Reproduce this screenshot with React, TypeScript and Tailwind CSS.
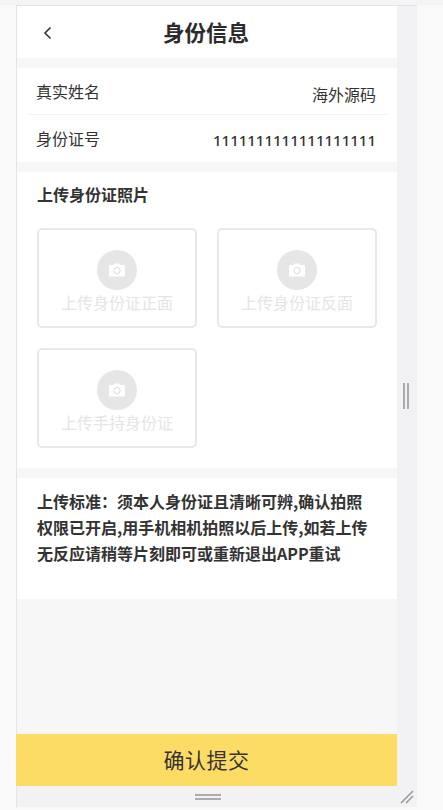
const font = { fontFamily: '"Noto Sans CJK SC", "Liberation Sans", sans-serif' };

function Camera() {
  return (
    <svg width="20" height="20" viewBox="0 0 20 20" aria-hidden="true">
      <path
        d="M3.5 5h3l1-1.6h5l1 1.6h3A1.2 1.2 0 0 1 18 6.2v9.2a1.2 1.2 0 0 1-1.2 1.2H3.2A1.2 1.2 0 0 1 2 15.4V6.2A1.2 1.2 0 0 1 3.5 5z"
        fill="#ffffff"
      />
      <circle cx="10" cy="10.6" r="3.1" fill="none" stroke="#dcdcdc" strokeWidth="1" />
    </svg>
  );
}

function UploadCard({ label }: { label: string }) {
  return (
    <div className="w-[160px] h-[100px] border-2 border-[#e8e8e8] rounded-[5px] flex flex-col items-center pt-[20px]">
      <div className="w-[40px] h-[40px] rounded-full bg-[#e6e6e6] flex items-center justify-center">
        <Camera />
      </div>
      <div className="text-[16px] leading-[24px] text-[#e5e5e5] whitespace-nowrap">{label}</div>
    </div>
  );
}

export default function App() {
  return (
    <div className="h-[810px] w-[443px] overflow-hidden bg-[#f9f9f9] text-[#333333]" style={font}>
      <div className="h-[5px] bg-[#f4f4f4]" />
      <div className="ml-[16px] relative w-[401px] h-[802px] bg-[#f2f2f4] border-l border-t border-[#e4e4e4] flex">
        <div className="w-[380px] h-[780px] bg-[#f7f7f8] flex flex-col">
          <header className="h-[52px] bg-white flex items-center relative shrink-0">
            <svg className="absolute left-[25px] top-[19px]" width="12" height="16" viewBox="0 0 12 16" aria-hidden="true">
              <path d="M8.5 2.5 3 8l5.5 5.5" fill="none" stroke="#333333" strokeWidth="1.6" />
            </svg>
            <h1 className="w-full text-center text-[21.5px] font-bold leading-[52px] text-[#2b2b2b] pr-[2px]">身份信息</h1>
          </header>

          <section className="mt-[10px] h-[94px] bg-white shrink-0 flex flex-col pl-[11px] pr-[9px]">
            <div className="h-[47px] flex justify-between pl-[9px] pr-[12px] border-b border-[#f2f2f2] text-[16px]">
              <span className="leading-[46px] -ml-px">真实姓名</span>
              <span className="leading-[52px]">海外源码</span>
            </div>
            <div className="h-[47px] flex justify-between pl-[9px] pr-[12px] text-[16px]">
              <span className="leading-[46px] -ml-px">身份证号</span>
              <span className="leading-[50px] text-[15px] font-medium" style={{ fontFamily: '"Noto Sans", sans-serif' }}>
                1111111111111111111
              </span>
            </div>
          </section>

          <section className="mt-[10px] h-[296px] bg-white shrink-0 px-[20px]">
            <h2 className="pt-[10px] text-[16px] font-bold leading-[24px]">上传身份证照片</h2>
            <div className="mt-[22px] grid grid-cols-[160px_160px] gap-x-[20px] gap-y-[20px]">
              <UploadCard label="上传身份证正面" />
              <UploadCard label="上传身份证反面" />
              <UploadCard label="上传手持身份证" />
            </div>
          </section>

          <section className="mt-[10px] h-[121px] bg-white shrink-0 px-[20px] pt-[10px] text-[16px] font-bold leading-[26px] text-[#333333]">
            <p>上传标准：须本人身份证且清晰可辨,确认拍照权限已开启,用手机相机拍照以后上传,如若上传无反应请稍等片刻即可或重新退出APP重试</p>
          </section>

          <div className="flex-1" />

          <button className="-ml-px w-[381px] h-[52px] bg-[#fddc65] text-[21px] text-[#333333] tracking-[0.5px] shrink-0">
            确认提交
          </button>
        </div>

        <div className="flex-1 h-[781px] flex items-center justify-center">
          <div className="flex gap-[2px] -ml-[2px] mt-[-2px]">
            <div className="w-[2px] h-[26px] bg-[#aaaaaa]" />
            <div className="w-[2px] h-[26px] bg-[#aaaaaa]" />
          </div>
        </div>

        <div className="absolute left-[178px] top-[788px] w-[26px] flex flex-col gap-[2px]">
          <div className="h-[2px] bg-[#acacac]" />
          <div className="h-[2px] bg-[#acacac]" />
        </div>

        <svg className="absolute left-[383px] top-[784px]" width="14" height="14" viewBox="0 0 14 14" aria-hidden="true">
          <path d="M1 13 13 1M6 13l7-7" stroke="#999999" strokeWidth="1.5" fill="none" />
        </svg>
      </div>
    </div>
  );
}
